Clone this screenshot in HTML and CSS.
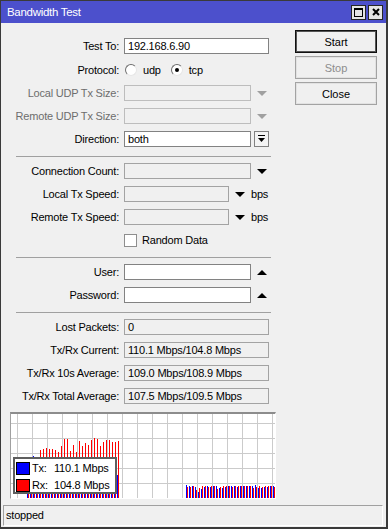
FILE: index.html
```html
<!DOCTYPE html>
<html lang="en">
<head>
    <meta charset="UTF-8">
    <meta name="viewport" content="width=device-width, initial-scale=1.0">
    <title>Bandwidth Test</title>
    <link rel="stylesheet" href="styles.css">
</head>
<body>
<div class="window">
    <div class="titlebar">
        <span class="title">Bandwidth Test</span>
        <div class="title-buttons">
            <span class="tbtn"><svg width="9" height="9" viewBox="0 0 9 9"><rect x="0.5" y="0.5" width="8" height="8" fill="none" stroke="#000"/><rect x="0" y="0" width="9" height="2" fill="#000"/></svg></span>
            <span class="tbtn"><svg width="8" height="8" viewBox="0 0 8 8"><path d="M1 1L7 7M7 1L1 7" stroke="#000" stroke-width="2"/></svg></span>
        </div>
    </div>

    <div class="main">
        <div class="form">
            <div class="row">
                <span class="lbl">Test To:</span>
                <div class="field edit w-full">192.168.6.90</div>
            </div>
            <div class="row row-radio">
                <span class="lbl">Protocol:</span>
                <span class="radio"></span><span class="opt">udp</span>
                <span class="radio checked"></span><span class="opt">tcp</span>
            </div>
            <div class="row">
                <span class="lbl disabled">Local UDP Tx Size:</span>
                <div class="field off w-mid"></div>
                <span class="arrow down grey"></span>
            </div>
            <div class="row">
                <span class="lbl disabled">Remote UDP Tx Size:</span>
                <div class="field off w-mid"></div>
                <span class="arrow down grey"></span>
            </div>
            <div class="row">
                <span class="lbl">Direction:</span>
                <div class="field edit w-mid">both</div>
                <span class="dir-btn"><svg width="7" height="8" viewBox="0 0 7 8"><rect x="0" y="0" width="7" height="1" fill="#000"/><polygon points="0,3 7,3 3.5,7" fill="#000"/></svg></span>
            </div>

            <div class="sep"></div>

            <div class="row">
                <span class="lbl">Connection Count:</span>
                <div class="field ro w-mid"></div>
                <span class="arrow down"></span>
            </div>
            <div class="row">
                <span class="lbl">Local Tx Speed:</span>
                <div class="field ro w-short"></div>
                <span class="arrow down"></span>
                <span class="unit">bps</span>
            </div>
            <div class="row">
                <span class="lbl">Remote Tx Speed:</span>
                <div class="field ro w-short"></div>
                <span class="arrow down"></span>
                <span class="unit">bps</span>
            </div>
            <div class="row">
                <span class="lbl"></span>
                <span class="check"></span>
                <span class="check-text">Random Data</span>
            </div>

            <div class="sep"></div>

            <div class="row">
                <span class="lbl">User:</span>
                <div class="field edit w-mid"></div>
                <span class="arrow up"></span>
            </div>
            <div class="row">
                <span class="lbl">Password:</span>
                <div class="field edit w-mid"></div>
                <span class="arrow up"></span>
            </div>

            <div class="sep"></div>

            <div class="row">
                <span class="lbl">Lost Packets:</span>
                <div class="field ro w-full">0</div>
            </div>
            <div class="row">
                <span class="lbl">Tx/Rx Current:</span>
                <div class="field ro w-full">110.1 Mbps/104.8 Mbps</div>
            </div>
            <div class="row">
                <span class="lbl">Tx/Rx 10s Average:</span>
                <div class="field ro w-full">109.0 Mbps/108.9 Mbps</div>
            </div>
            <div class="row">
                <span class="lbl">Tx/Rx Total Average:</span>
                <div class="field ro w-full">107.5 Mbps/109.5 Mbps</div>
            </div>
        </div>

        <div class="actions">
            <button class="btn default">Start</button>
            <button class="btn" disabled>Stop</button>
            <button class="btn">Close</button>
        </div>
    </div>

    <div class="graph">
        <svg width="264" height="84" viewBox="0 0 264 84">
            <g id="grid" stroke="#cbcbcb" stroke-width="1"></g>
            <g id="bars"></g>
        </svg>
        <div class="legend">
            <div class="legend-row"><span class="swatch tx"></span><span class="legend-key">Tx:</span>110.1 Mbps</div>
            <div class="legend-row"><span class="swatch rx"></span><span class="legend-key">Rx:</span>104.8 Mbps</div>
        </div>
    </div>

    <div class="status">stopped</div>
</div>
<script src="script.js"></script>
</body>
</html>
```

FILE: styles.css
```css
* { box-sizing: border-box; }
body { margin: 0; font-family: "Liberation Sans", Arial, sans-serif; font-size: 11px; letter-spacing: -0.2px; color: #000; background: #fff; }

.window { width: 388px; height: 529px; background: #f0f0f0; border: 1px solid #3a3a3a; border-right-width: 2px; border-bottom-width: 2px; display: flex; flex-direction: column; }

.titlebar { height: 22px; flex: none; background: #4c50cc; display: flex; align-items: center; justify-content: space-between; padding: 0 3px 0 6px; }
.title { color: #fff; font-size: 11.5px; letter-spacing: -0.3px; }
.title-buttons { display: flex; gap: 2px; }
.tbtn { width: 15px; height: 15px; background: #e4e4e4; border: 1px solid #262626; display: flex; align-items: center; justify-content: center; }

.main { display: flex; }
.form { width: 275px; padding-top: 15px; display: flex; flex-direction: column; }
.actions { margin-left: 19px; padding-top: 7px; display: flex; flex-direction: column; gap: 3px; }

.row { display: flex; align-items: center; height: 16px; margin-top: 7px; }
.row:first-child { margin-top: 0; }
.row-radio { height: 17px; }
.sep + .row { margin-top: 6px; }
.sep { margin: 9px 0 0 15px; width: 255px; border-top: 1px solid #a0a0a0; }

.lbl { width: 118px; flex: none; margin-right: 5px; text-align: right; white-space: nowrap; }
.lbl.disabled { color: #6d6d6d; }

.field { height: 16px; flex: none; border: 1px solid #828282; padding-left: 3px; line-height: 14px; white-space: nowrap; }
.edit { background: #fff; }
.off { background: #f0f0f0; border-color: #bdbdbd; }
.ro { background: #f0f0f0; border-color: #a3a3a3; }
.w-full { width: 145px; }
.w-mid { width: 127px; }
.w-short { width: 105px; }

.arrow { width: 0; height: 0; margin-left: 6px; border-left: 5px solid transparent; border-right: 5px solid transparent; }
.arrow.down { border-top: 5px solid #000; }
.arrow.up { border-bottom: 5px solid #000; }
.arrow.down.grey { border-top-color: #a0a0a0; }
.unit { margin-left: 6px; }

.dir-btn { width: 15px; height: 16px; margin-left: 3px; border: 1px solid #828282; background: #f4f4f4; display: flex; align-items: center; justify-content: center; }

.radio { position: relative; width: 12px; height: 12px; margin-left: 1px; border-radius: 50%; background: #fff; border: 1px solid; border-color: #6e6e6e #e6e6e6 #e6e6e6 #6e6e6e; }
.radio.checked::after { content: ""; position: absolute; left: 3px; top: 3px; width: 4px; height: 4px; border-radius: 50%; background: #000; }
.opt { margin: 0 9px 0 6px; }

.check { width: 13px; height: 13px; background: #fff; border: 1px solid #8e8e8e; }
.check-text { margin-left: 5px; }

.btn { width: 82px; height: 23px; padding: 0; font: inherit; color: #000; background: #f0f0f0; border: 1px solid #a3a3a3; box-shadow: inset 0 0 0 1px #e2e2e2; }
.btn.default { border-color: #111; box-shadow: inset 0 0 0 1px #555; }
.btn:disabled { color: #8d8d8d; }

.graph { position: relative; width: 266px; height: 87px; margin: 8px 0 0 9px; background: #fff; border-style: solid; border-width: 2px 1px 1px 1px; border-color: #8c8c8c #fff #fff #a0a0a0; }
.graph svg { display: block; }

.legend { position: absolute; left: 2px; top: 43px; width: 104px; height: 37px; padding: 1px 0 0 1px; background: #fff; border: 2px solid #5e5e5e; }
.legend-row { display: flex; align-items: center; height: 16px; margin-bottom: 1px; }
.swatch { width: 14px; height: 13px; margin-right: 2px; border: 1px solid #000; }
.swatch.tx { background: #0000ff; }
.swatch.rx { background: #ff0000; }
.legend-key { width: 22px; }

.status { width: 380px; height: 21px; margin: 6px 0 0 2px; padding-left: 2px; line-height: 19px; border: 1px solid; border-color: #a0a0a0 #fff #fff #a0a0a0; }
```

FILE: script.js
```js
const svgNS = 'http://www.w3.org/2000/svg';
const grid = document.getElementById('grid');
const bars = document.getElementById('bars');
const H = 84;

function line(x1, y1, x2, y2) {
    const l = document.createElementNS(svgNS, 'line');
    l.setAttribute('x1', x1); l.setAttribute('y1', y1);
    l.setAttribute('x2', x2); l.setAttribute('y2', y2);
    grid.appendChild(l);
}

function bar(x, h, color) {
    const r = document.createElementNS(svgNS, 'rect');
    r.setAttribute('x', x);
    r.setAttribute('y', H - h);
    r.setAttribute('width', 1);
    r.setAttribute('height', h);
    r.setAttribute('fill', color);
    bars.appendChild(r);
}

// grid, 15px cells
for (let x = 6; x < 264; x += 15) line(x + 0.5, 0, x + 0.5, H);
for (let y = 9; y < H; y += 15) line(0, y + 0.5, 264, y + 0.5);

// first run
const leftTx = [7, 9, 42, 8, 30, 28, 33, 25, 31, 36, 27, 30, 34, 29, 35, 31, 26, 33, 37, 30, 28, 34, 32, 29, 36, 31, 27, 35, 30, 33, 23];
const leftRx = [6, 8, 7, 8, 48, 49, 50, 49, 49, 48, 46, 52, 59, 59, 47, 53, 46, 57, 52, 55, 53, 58, 60, 59, 52, 56, 58, 58, 56, 56, 57];
leftTx.forEach((h, i) => {
    bar(16 + i * 3, h, '#0000ff');
    bar(17 + i * 3, leftRx[i], '#ff0000');
});

// current run
const rightTx = [13, 12, 12, 11, 6, 9, 11, 12, 11, 12, 12, 10, 10, 11, 12, 12, 12, 11, 12, 12, 12, 12, 12, 13, 10, 10, 11, 11, 12, 12];
const rightRx = [11, 11, 12, 8, 10, 12, 12, 11, 12, 12, 9, 11, 12, 12, 12, 11, 12, 12, 12, 12, 12, 12, 10, 11, 12, 11, 12, 12, 12, 11];
rightTx.forEach((h, i) => {
    bar(175 + i * 3, h, '#0000ff');
    bar(176 + i * 3, rightRx[i], '#ff0000');
});
```
